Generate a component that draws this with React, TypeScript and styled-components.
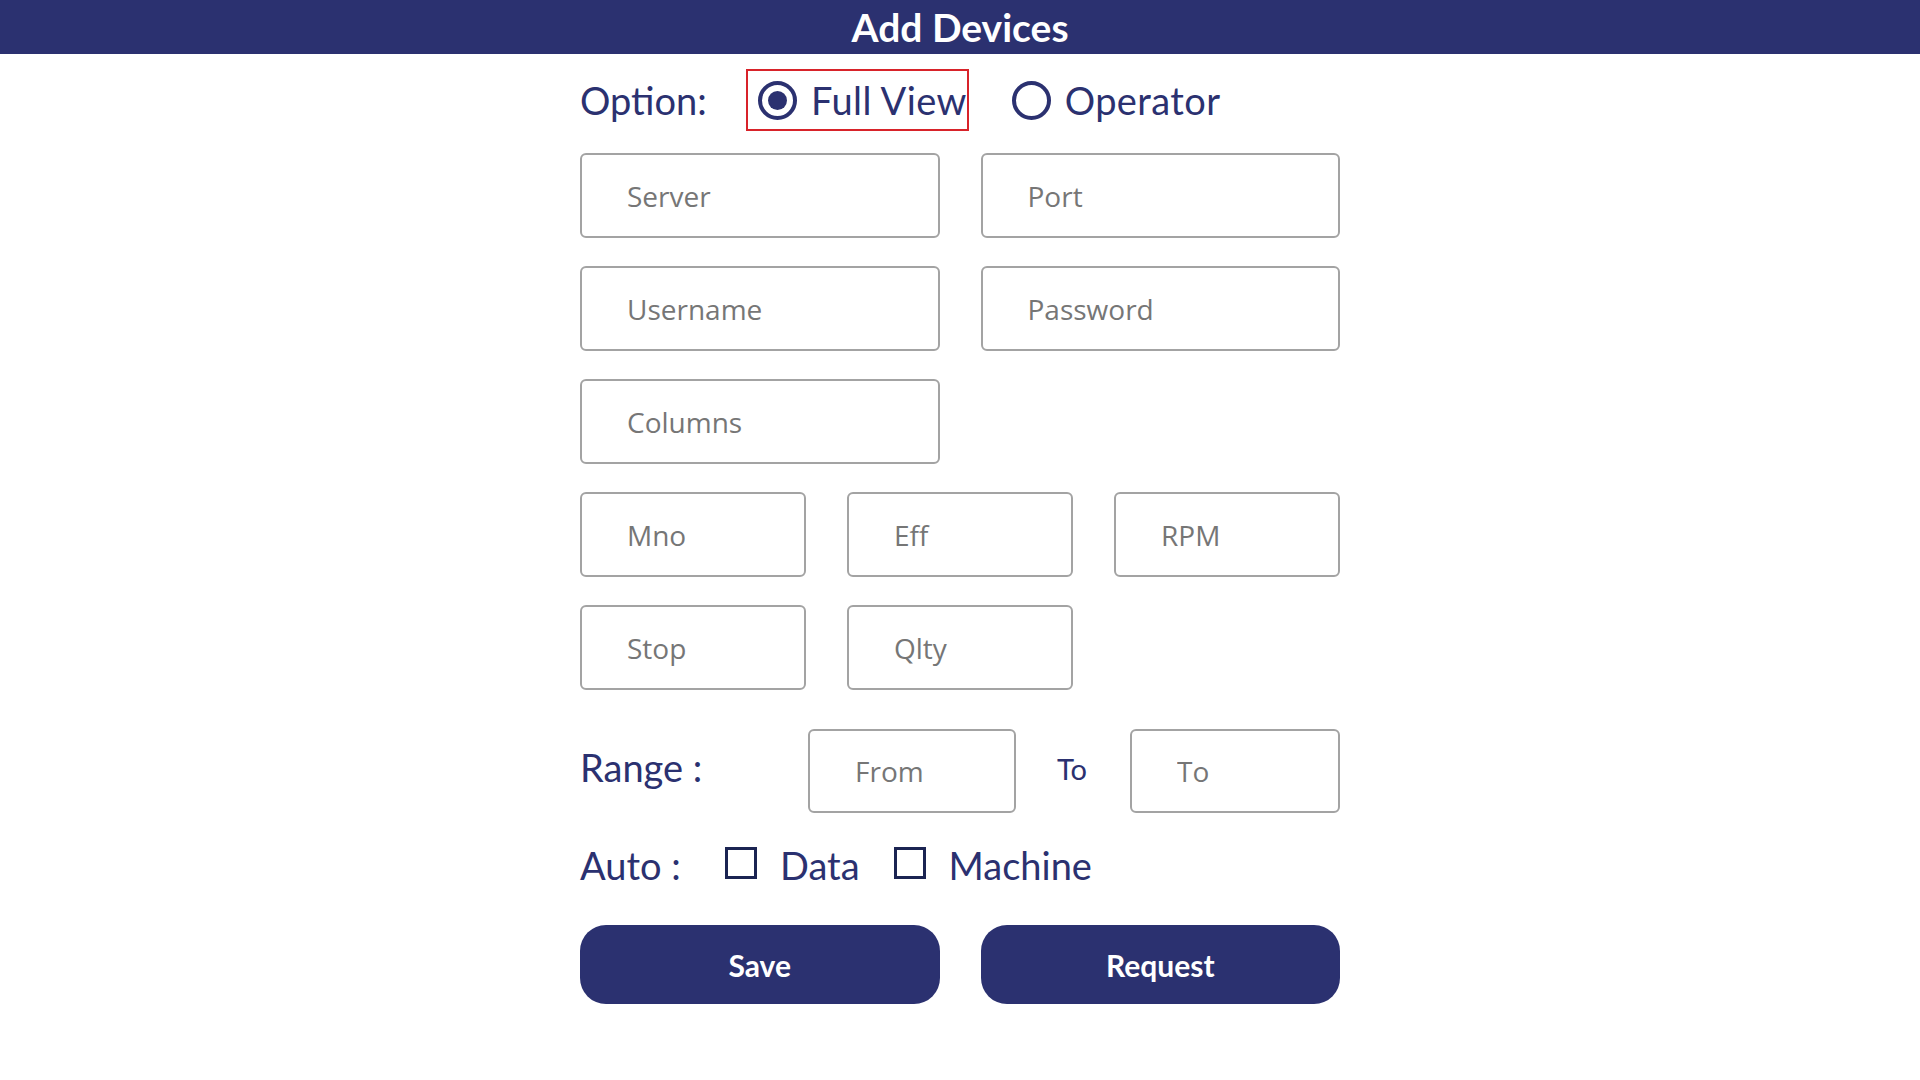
import React, { useState } from "react";
import styled, { createGlobalStyle } from "styled-components";

const NAVY = "#2b3170";

const GlobalStyle = createGlobalStyle`
    body {
        margin: 0;
        background: #ffffff;
        font-family: Lato, "Open Sans", sans-serif;
    }
    * {
        box-sizing: border-box;
    }
`;

const Header = styled.div`
    height: 54px;
    background: ${NAVY};
    display: flex;
    align-items: center;
    justify-content: center;
    color: #ffffff;
    font-size: 39px;
    font-weight: 700;
`;

const Form = styled.div`
    width: 760px;
    margin: 0 auto;
    padding-top: 15px;
    display: flex;
    flex-direction: column;
`;

const OptionRow = styled.div`
    height: 62px;
    display: flex;
    align-items: center;
    margin-bottom: 22px;
`;

const Label = styled.span<{ $width?: number; $lift?: number }>`
    color: ${NAVY};
    font-size: 38px;
    width: ${(p) => (p.$width ? `${p.$width}px` : "auto")};
    margin-top: ${(p) => (p.$lift ? `-${p.$lift}px` : "0")};
    flex-shrink: 0;
`;

const RadioLabel = styled.label<{ $focused?: boolean }>`
    display: flex;
    align-items: center;
    gap: 14px;
    height: 62px;
    padding: 0 0 0 10px;
    border: 2px solid ${(p) => (p.$focused ? "#d8232a" : "transparent")};
    color: ${NAVY};
    font-size: 38px;
    letter-spacing: 0.4px;
    cursor: pointer;
`;

const RadioCircle = styled.span<{ $checked: boolean }>`
    width: 39px;
    height: 39px;
    border-radius: 50%;
    border: 4px solid ${NAVY};
    display: flex;
    align-items: center;
    justify-content: center;
    &::after {
        content: "";
        width: 19px;
        height: 19px;
        border-radius: 50%;
        background: ${(p) => (p.$checked ? NAVY : "transparent")};
    }
`;

const Grid = styled.div<{ $cols: number }>`
    display: grid;
    grid-template-columns: repeat(${(p) => p.$cols}, 1fr);
    column-gap: 41px;
    margin-bottom: 28px;
`;

const Field = styled.input`
    height: 85px;
    width: 100%;
    border: 2px solid #a3a3a3;
    border-radius: 6px;
    padding: 0 0 0 45px;
    font-family: "Open Sans", sans-serif;
    font-size: 28px;
    color: #333;
    outline: none;
    &::placeholder {
        color: #767676;
    }
`;

const RangeRow = styled.div`
    display: flex;
    align-items: center;
    margin-top: 11px;
`;

const RangeField = styled(Field)<{ $w: number }>`
    width: ${(p) => p.$w}px;
    height: 84px;
    padding-left: 45px;
`;

const ToLabel = styled.span`
    color: ${NAVY};
    font-size: 29px;
    width: 114px;
    padding-left: 41px;
    margin-top: -6px;
`;

const AutoRow = styled.div`
    display: flex;
    align-items: center;
    height: 60px;
    margin-top: 22px;
`;

const CheckLabel = styled.label`
    display: flex;
    align-items: center;
    gap: 23px;
    margin-right: 34px;
    color: ${NAVY};
    font-size: 38px;
    cursor: pointer;
`;

const CheckBox = styled.span<{ $checked: boolean }>`
    width: 32px;
    height: 32px;
    border: 3px solid #1b2452;
    background: ${(p) => (p.$checked ? NAVY : "#fff")};
    margin-top: -4px;
`;

const Buttons = styled.div`
    display: grid;
    grid-template-columns: 1fr 1fr;
    column-gap: 41px;
    margin-top: 30px;
`;

const Button = styled.button`
    height: 79px;
    border: none;
    border-radius: 26px;
    background: ${NAVY};
    color: #ffffff;
    font-family: Lato, sans-serif;
    font-size: 30px;
    font-weight: 700;
    cursor: pointer;
`;

const App = () => {
    const [option, setOption] = useState("full");
    const [autoData, setAutoData] = useState(false);
    const [autoMachine, setAutoMachine] = useState(false);

    return (
        <>
            <GlobalStyle />
            <Header>Add Devices</Header>
            <Form>
                <OptionRow>
                    <Label $width={166}>Option:</Label>
                    <RadioLabel
                        $focused={option === "full"}
                        onClick={() => setOption("full")}
                    >
                        <RadioCircle $checked={option === "full"} />
                        Full View
                    </RadioLabel>
                    <RadioLabel
                        style={{ marginLeft: 31 }}
                        onClick={() => setOption("operator")}
                    >
                        <RadioCircle $checked={option === "operator"} />
                        Operator
                    </RadioLabel>
                </OptionRow>
                <Grid $cols={2}>
                    <Field placeholder="Server" />
                    <Field placeholder="Port" />
                </Grid>
                <Grid $cols={2}>
                    <Field placeholder="Username" />
                    <Field placeholder="Password" type="password" />
                </Grid>
                <Grid $cols={2}>
                    <Field placeholder="Columns" />
                </Grid>
                <Grid $cols={3}>
                    <Field placeholder="Mno" />
                    <Field placeholder="Eff" />
                    <Field placeholder="RPM" />
                </Grid>
                <Grid $cols={3}>
                    <Field placeholder="Stop" />
                    <Field placeholder="Qlty" />
                </Grid>
                <RangeRow>
                    <Label $width={228} $lift={8}>
                        Range :
                    </Label>
                    <RangeField $w={208} placeholder="From" />
                    <ToLabel>To</ToLabel>
                    <RangeField $w={210} placeholder="To" />
                </RangeRow>
                <AutoRow>
                    <Label $width={145}>Auto :</Label>
                    <CheckLabel onClick={() => setAutoData(!autoData)}>
                        <CheckBox $checked={autoData} />
                        Data
                    </CheckLabel>
                    <CheckLabel onClick={() => setAutoMachine(!autoMachine)}>
                        <CheckBox $checked={autoMachine} />
                        Machine
                    </CheckLabel>
                </AutoRow>
                <Buttons>
                    <Button>Save</Button>
                    <Button>Request</Button>
                </Buttons>
            </Form>
        </>
    );
};

export default App;
